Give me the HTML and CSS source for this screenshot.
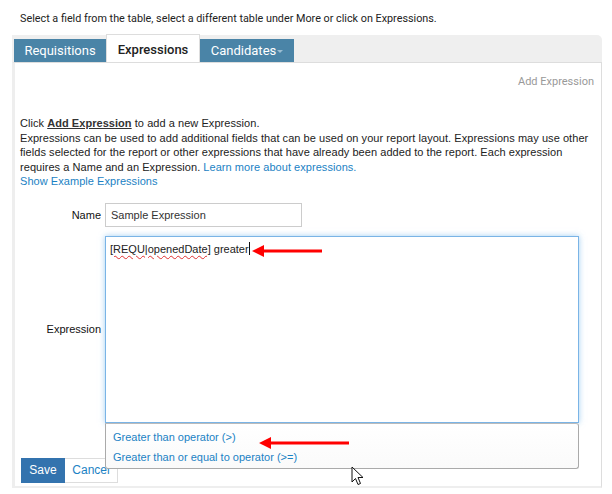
FILE: index.html
```html
<!DOCTYPE html>
<html>
<head>
<meta charset="utf-8">
<link rel="stylesheet" href="styles.css">
</head>
<body>
<div class="hint">Select a field from the table, select a different table under More or click on Expressions.</div>
<div class="panel">
  <div class="tabbar">
    <div class="tab">Requisitions</div>
    <div class="tab active">Expressions</div>
    <div class="tab">Candidates<span class="caret"></span></div>
  </div>
  <div class="content">
    <div class="addlink">Add Expression</div>
    <div class="intro">
      Click <b class="strong">Add Expression</b> to add a new Expression.<br>
      Expressions can be used to add additional fields that can be used on your report layout. Expressions may use other<br>
      fields selected for the report or other expressions that have already been added to the report. Each expression<br>
      requires a Name and an Expression. <span class="link">Learn more about expressions.</span><br>
      <span class="link">Show Example Expressions</span>
    </div>
    <div class="form">
      <div class="label">Name</div>
      <div class="input">Sample Expression</div>
      <div class="label">Expression</div>
      <div class="areawrap">
        <div class="area"><span class="squig">[REQU|openedDate]</span> greater<span class="cursor"></span></div>
        <div class="dropdown">
          <div class="item">Greater than operator (&gt;)</div>
          <div class="item">Greater than or equal to operator (&gt;=)</div>
        </div>
      </div>
    </div>
    <div class="buttons">
      <div class="btn save">Save</div>
      <div class="btn cancel">Cancel</div>
    </div>
  </div>
</div>
<svg class="arrow a1" width="72" height="14" viewBox="0 0 72 14"><path d="M0 7 L12 1 L12 5.5 L70 5.5 L70 8.5 L12 8.5 L12 13 Z" fill="#f00"/></svg>
<svg class="arrow a2" width="92" height="14" viewBox="0 0 92 14"><path d="M0 7 L12 1 L12 5.5 L90 5.5 L90 8.5 L12 8.5 L12 13 Z" fill="#f00"/></svg>
<svg class="mouse" width="14" height="20" viewBox="0 0 14 20"><path d="M1 1 L1 16 L4.5 12.5 L7 18.5 L9.5 17.5 L7 11.5 L12 11.5 Z" fill="#fff" stroke="#111" stroke-width="1" stroke-linejoin="round"/></svg>
</body>
</html>
```
FILE: styles.css
```css
html, body {
  margin: 0;
  padding: 0;
  background: #fff;
}
body {
  font-family: Roboto, "Liberation Sans", Arial, sans-serif;
  color: #222;
  position: relative;
  width: 612px;
  height: 494px;
  overflow: hidden;
}
.hint {
  font-size: 10.8px;
  line-height: 14px;
  padding: 12px 0 0 20px;
  height: 23px;
}
.panel {
  margin-left: 12px;
  width: 590px;
}
.tabbar {
  background: #efefef;
  border-top-right-radius: 5px;
  height: 27px;
  display: flex;
  align-items: flex-end;
  padding-left: 2px;
}
.tab {
  height: 23px;
  line-height: 23px;
  font-size: 13px;
  color: #fff;
  background: #4a84a7;
  box-sizing: border-box;
  white-space: nowrap;
  text-align: center;
  width: 92px;
}
.tab.active {
  background: #fff;
  color: #222;
  font-weight: 500;
  height: 28px;
  line-height: 29px;
  border: 1px solid #ddd;
  border-bottom: none;
  width: 94px;
}
.tab:last-child {
  width: 94px;
}
.caret {
  display: inline-block;
  width: 0;
  height: 0;
  border-left: 3px solid transparent;
  border-right: 3px solid transparent;
  border-top: 3px solid #9bbdd2;
  vertical-align: middle;
  margin-left: 1px;
}
.content {
  border: 1px solid #ddd;
  border-left: 3px solid #eee;
  border-bottom: 2px solid #eee;
  height: 426px;
  box-sizing: border-box;
  padding: 12px 7px 0 5px;
  position: relative;
}
.addlink {
  text-align: right;
  font-size: 11px;
  line-height: 14px;
  color: #999;
}
.intro {
  margin-top: 27px;
  font-family: "Liberation Sans", Arial, sans-serif;
  font-size: 11px;
  letter-spacing: 0.05px;
  line-height: 14.5px;
  color: #222;
}
.strong {
  font-weight: bold;
  text-decoration: underline;
  color: #333;
}
.link {
  color: #1b82c4;
}
.form {
  display: grid;
  grid-template-columns: 81px 474px;
  column-gap: 4px;
  row-gap: 9px;
  margin-top: 14px;
  align-items: center;
}
.label {
  text-align: right;
  font-family: "Liberation Sans", Arial, sans-serif;
  font-size: 11px;
  color: #111;
}
.input {
  width: 197px;
  height: 24px;
  box-sizing: border-box;
  border: 1px solid #ccc;
  font-family: "Liberation Sans", Arial, sans-serif;
  font-size: 11px;
  line-height: 22px;
  padding-left: 5px;
  color: #333;
}
.areawrap {
  position: relative;
}
.area {
  height: 187px;
  box-sizing: border-box;
  border: 1px solid #7ab4e6;
  box-shadow: 0 0 6px rgba(102, 175, 233, 0.6);
  font-family: "Liberation Sans", Arial, sans-serif;
  font-size: 11px;
  line-height: 14px;
  padding: 5px 4px;
  color: #222;
}
.squig {
  text-decoration: underline wavy #e03030;
  text-decoration-thickness: 1px;
  text-underline-offset: 2px;
}
.cursor {
  display: inline-block;
  width: 1px;
  height: 13px;
  background: #111;
  vertical-align: -2px;
}
.dropdown {
  position: absolute;
  top: 100%;
  left: 0;
  width: 474px;
  height: 46px;
  box-sizing: border-box;
  border: 1px solid #aaa;
  border-top-color: #bbb;
  border-radius: 0 3px 3px 3px;
  background: linear-gradient(#fff, #fafafa);
  padding: 3px 0 0 7px;
  z-index: 2;
}
.item {
  font-family: "Liberation Sans", Arial, sans-serif;
  font-size: 11px;
  line-height: 20px;
  color: #1b82c4;
}
.buttons {
  display: flex;
  margin-top: 35px;
  margin-left: 1px;
}
.btn {
  height: 25px;
  line-height: 25px;
  font-family: "Liberation Sans", Arial, sans-serif;
  font-size: 12px;
  box-sizing: border-box;
  text-align: center;
}
.save {
  width: 44px;
  background: #3373ae;
  color: #fff;
}
.cancel {
  width: 53px;
  border: 1px solid #ddd;
  border-left: none;
  color: #1b82c4;
  line-height: 23px;
}
.arrow {
  position: absolute;
  z-index: 5;
}
.a1 {
  left: 252px;
  top: 244px;
}
.a2 {
  left: 259px;
  top: 436px;
}
.mouse {
  position: absolute;
  left: 351px;
  top: 466px;
  z-index: 6;
}
```
